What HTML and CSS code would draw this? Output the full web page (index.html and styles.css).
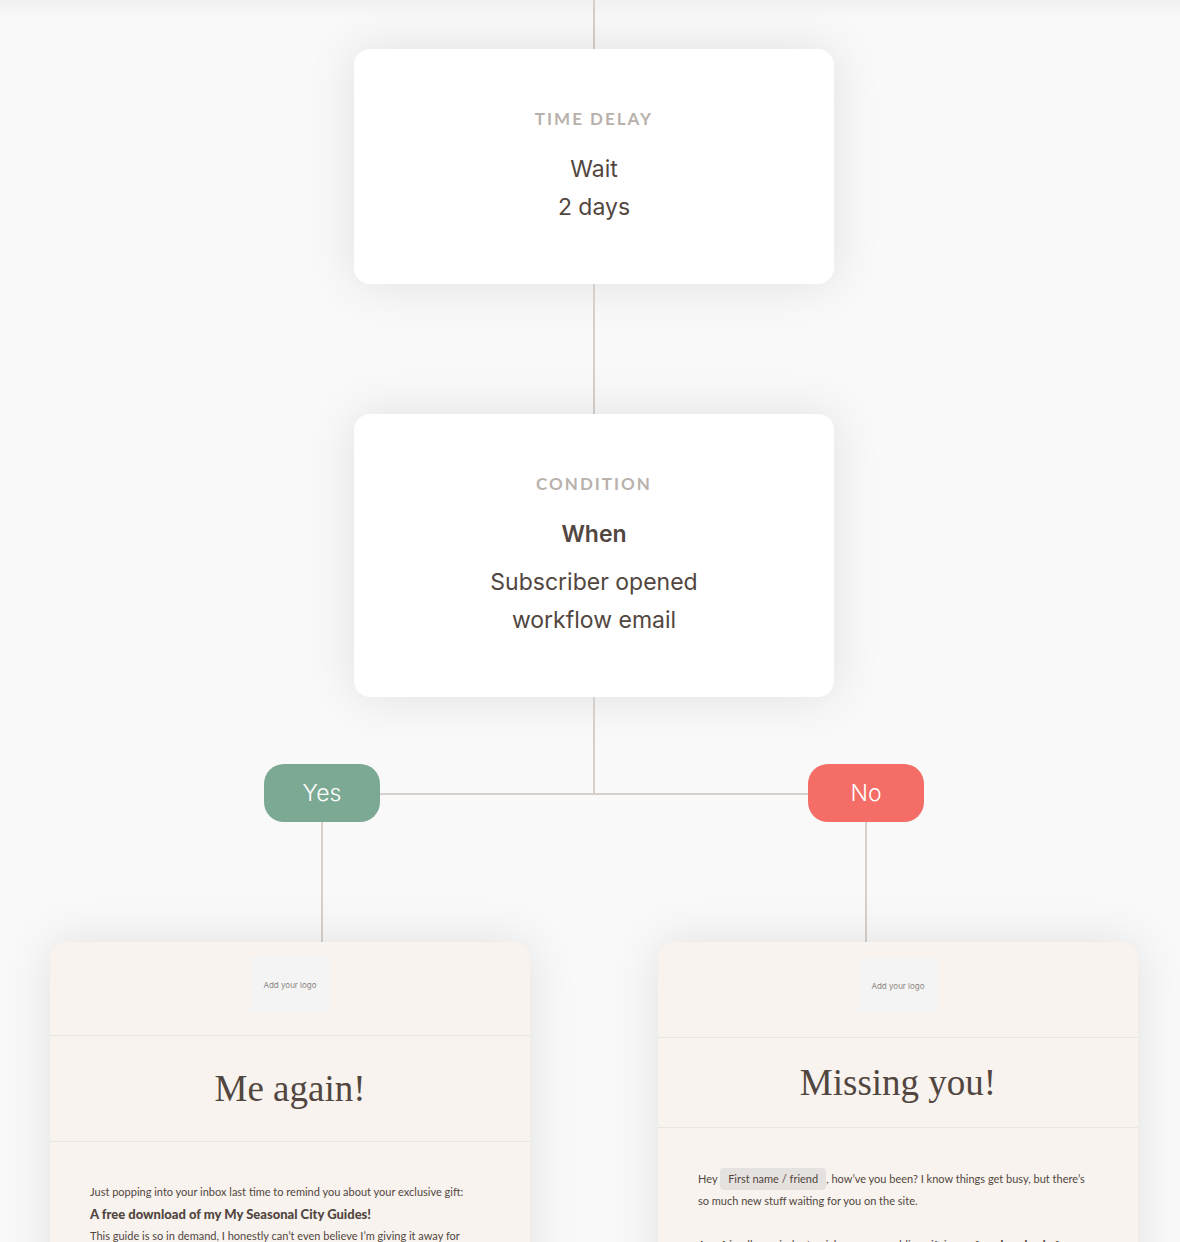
FILE: index.html
```html
<!doctype html>
<html lang="en">
<head>
  <meta charset="utf-8" />
  <meta name="viewport" content="width=device-width, initial-scale=1" />
  <title>Workflow</title>
  <link rel="stylesheet" href="styles.css">
</head>

<body>
  <main class="canvas">
    <div class="line lineTop"></div>

    <section class="card" aria-label="Time delay">
      <h2 class="label">TIME DELAY</h2>
      <p class="text">Wait<br>2 days</p>
    </section>

    <div class="line lineStep"></div>

    <section class="card" aria-label="Condition">
      <h2 class="label">CONDITION</h2>
      <p class="text when">When</p>
      <p class="text">Subscriber opened<br>workflow email</p>
    </section>

    <div class="line lineSplit"></div>

    <div class="branch">
      <div class="arm">
        <span class="pill pillYes">Yes</span>
        <div class="line lineArm"></div>
      </div>
      <div class="fork">
        <div class="line lineFork"></div>
        <div class="bar"></div>
      </div>
      <div class="arm">
        <span class="pill pillNo">No</span>
        <div class="line lineArm"></div>
      </div>
    </div>

    <div class="emails">
      <article class="email">
        <header class="emailTop">
          <div class="logo">Add your logo</div>
        </header>
        <h1 class="emailTitle">Me again!</h1>
        <div class="emailBody">
          <p>Just popping into your inbox last time to remind you about your exclusive gift:</p>
          <p class="offer"><strong>A free download of my My Seasonal City Guides!</strong></p>
          <p>This guide is so in demand, I honestly can’t even believe I’m giving it away for</p>
        </div>
      </article>

      <article class="email emailCompact">
        <header class="emailTop">
          <div class="logo">Add your logo</div>
        </header>
        <h1 class="emailTitle">Missing you!</h1>
        <div class="emailBody">
          <p>Hey <span class="chip">First name / friend</span>, how’ve you been? I know things get busy, but there’s<br>so much new stuff waiting for you on the site.</p>
          <p class="para">As a friendly reminder to pick up your wedding gift in our <strong>free download of my</strong></p>
        </div>
      </article>
    </div>
  </main>
</body>
</html>
```
FILE: styles.css
```css
:root{
  --bg:#f9f9f9;
  --line:#d6d0cc;
  --text:#524640;
  --muted:#b8b1ac;
  --paper:#f8f3ef;
  --rule:#e6e6e2;
  --yes:#7ba994;
  --no:#f46d66;
  --shadow: 0 0 50px rgba(0,0,0,.1);
}

*{ box-sizing:border-box; }
body{
  margin:0;
  font-family: Inter, "Liberation Sans", sans-serif;
  background:var(--bg);
  color:var(--text);
}
h1, h2, p{ margin:0; }

.canvas{
  height:100vh;
  overflow:hidden;
  display:flex;
  flex-direction:column;
  align-items:center;
  padding-left:8px;
  /* shade under the toolbar */
  background: linear-gradient(180deg, #f1f1f1, var(--bg) 18px);
}
.canvas > *{ flex:none; }

/* connectors */
.line{
  width:2px;
  background:var(--line);
}
.lineTop{ height:49px; }
.lineStep{ height:130px; }
.lineSplit{ height:67px; }
.lineFork{ height:29px; }
.lineArm{ height:120px; }
.bar{
  width:100%;
  height:2px;
  background:var(--line);
}

.card{
  width:480px;
  padding:58px 40px;
  border-radius:16px;
  background:#fff;
  box-shadow: var(--shadow);
  text-align:center;
}
.label{
  margin-bottom:19px;
  font-family: Lato, sans-serif;
  font-size:17px;
  font-weight:700;
  line-height:24px;
  letter-spacing:2px;
  color:var(--muted);
}
.text{
  font-size:23px;
  line-height:38px;
}
.when{
  margin-bottom:10px;
  font-weight:600;
}

.branch{
  width:660px;
  display:grid;
  grid-template-columns:116px 1fr 116px;
}
.arm, .fork{
  display:flex;
  flex-direction:column;
  align-items:center;
}
.pill{
  width:100%;
  border-radius:20px;
  font-size:23px;
  font-weight:300;
  line-height:58px;
  text-align:center;
  color:#fff;
}
.pillYes{ background:var(--yes); }
.pillNo{ background:var(--no); }

.emails{
  display:grid;
  grid-template-columns:480px 480px;
  gap:128px;
}
.email{
  border-radius:16px;
  background:var(--paper);
  box-shadow: var(--shadow);
  padding-bottom:60px;
}
.emailTop{
  display:flex;
  justify-content:center;
  padding:15px 0 23px;
  border-bottom:1px solid var(--rule);
}
.logo{
  width:80px;
  height:55px;
  border-radius:3px;
  background:#f4f4f4;
  font-size:8px;
  line-height:56px;
  text-align:center;
  color:#8b847f;
}
.emailTitle{
  padding:28px 0;
  border-bottom:1px solid var(--rule);
  font-family: "Liberation Serif", serif;
  font-size:37px;
  font-weight:400;
  line-height:49px;
  text-align:center;
}
.emailBody{
  padding:39px 40px 0;
  font-family: Lato, sans-serif;
  font-size:11px;
  line-height:22px;
  white-space:nowrap;
}
.emailBody strong{ font-weight:900; }
.offer{ font-size:13px; }
.para{ margin-top:22px; }

.emailCompact .emailTop{ padding:16px 0 24px; }
.emailCompact .emailTitle{ padding:20px 0; }
.emailCompact .emailBody{ padding-top:40px; }

.chip{
  display:inline-block;
  padding:0 8px;
  border-radius:4px;
  background:#e5e1de;
}
```
